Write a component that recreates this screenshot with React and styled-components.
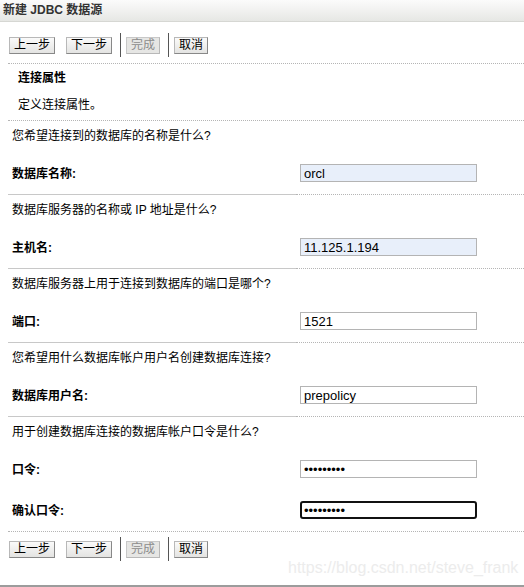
import React from "react";
import styled, { createGlobalStyle, css } from "styled-components";

const Global = createGlobalStyle`
  html, body { margin: 0; padding: 0; background: #fff; }
  body { font-family: "Liberation Sans", "Noto Sans CJK SC", sans-serif; font-size: 12px; color: #000; }
`;

const Page = styled.div`
  position: relative;
  width: 524px;
  height: 587px;
  box-sizing: border-box;
  border-bottom: 2px solid #9c9c9c;
  overflow: hidden;
  background: #fff;
`;

const TitleBar = styled.div`
  height: 21px;
  line-height: 21px;
  padding-left: 3px;
  font-size: 12px;
  font-weight: bold;
  color: #333;
  background: linear-gradient(#fbfbfb, #f2f2f1 45%, #e6e7e4);
  border-bottom: 1px solid #d6d7d3;
`;

const Toolbar = styled.div`
  display: flex;
  align-items: center;
  height: 24px;
  padding: ${(p) => (p.$bottom ? "5px 0 0 9px" : "11px 0 6px 9px")};
`;

const Button = styled.button`
  height: 17px;
  padding: 0 4px;
  margin: 0;
  margin-right: ${(p) => p.$mr || 0}px;
  font-family: "Liberation Sans", "Noto Sans CJK SC", sans-serif;
  font-size: 12px;
  line-height: 15px;
  color: ${(p) => (p.disabled ? "#8c8c8c" : "#000")};
  background: ${(p) =>
    p.disabled ? "#e6e6e4" : "linear-gradient(#fafafa, #e4e4e2)"};
  border: 1px solid;
  border-color: ${(p) =>
    p.disabled ? "#c8c8c8 #b8b8b8 #b8b8b8 #c8c8c8" : "#b8b8b8 #888 #888 #b8b8b8"};
  border-radius: 0;
  cursor: default;
`;

const VSep = styled.div`
  width: 1px;
  height: 24px;
  background: #555;
  margin: 0 5px 0 8px;
`;

const DottedLine = styled.div`
  margin-left: 8px;
  border-top: 1px dotted #b5b5b5;
`;

const SplitLine = styled.div`
  display: flex;
  margin-left: 8px;
  height: 1px;
`;

const SolidPart = styled.div`
  width: 288px;
  border-top: 1px solid #c8c8c8;
`;

const DotPart = styled.div`
  flex: 1;
  border-top: 1px dotted #b5b5b5;
`;

const Header = styled.div`
  height: 56px;
  padding-left: 18px;
`;

const HeaderTitle = styled.div`
  padding-top: 7px;
  line-height: 14px;
  font-weight: bold;
`;

const HeaderDesc = styled.div`
  margin-top: 13px;
  line-height: 14px;
`;

const Section = styled.div`
  padding: 8px 0 12px 12px;
`;

const Question = styled.div`
  line-height: 14px;
  height: 14px;
  margin-bottom: 21px;
`;

const FieldRow = styled.div`
  display: grid;
  grid-template-columns: 288px 177px;
  align-items: center;
  height: 18px;
  margin-top: ${(p) => p.$mt || 0}px;
`;

const Label = styled.label`
  font-weight: bold;
  line-height: 14px;
  padding-top: 1px;
`;

const Input = styled.input`
  box-sizing: border-box;
  width: 177px;
  height: 18px;
  margin: 0;
  padding: 0 3px;
  font-family: "Liberation Sans", sans-serif;
  font-size: 13px;
  color: #000;
  background: ${(p) => (p.$filled ? "#e8effa" : "#fff")};
  border: 1px solid #b4b4b4;
  border-radius: 0;
  outline: none;
  ${(p) =>
    p.$focused &&
    css`
      border: 2px solid #111;
      border-radius: 3px;
      padding: 0 2px;
    `}
`;

const Watermark = styled.div`
  position: absolute;
  left: 288px;
  top: 559px;
  font-family: "Liberation Sans", sans-serif;
  font-size: 16px;
  line-height: 18px;
  color: #ececec;
  white-space: nowrap;
`;

function Buttons({ bottom }) {
  return (
    <Toolbar $bottom={bottom}>
      <Button $mr={11}>上一步</Button>
      <Button>下一步</Button>
      <VSep />
      <Button disabled>完成</Button>
      <VSep />
      <Button>取消</Button>
    </Toolbar>
  );
}

const sections = [
  {
    q: "您希望连接到的数据库的名称是什么?",
    fields: [{ label: "数据库名称:", value: "orcl", filled: true }],
  },
  {
    q: "数据库服务器的名称或 IP 地址是什么?",
    fields: [{ label: "主机名:", value: "11.125.1.194", filled: true }],
  },
  {
    q: "数据库服务器上用于连接到数据库的端口是哪个?",
    fields: [{ label: "端口:", value: "1521" }],
  },
  {
    q: "您希望用什么数据库帐户用户名创建数据库连接?",
    fields: [{ label: "数据库用户名:", value: "prepolicy" }],
  },
  {
    q: "用于创建数据库连接的数据库帐户口令是什么?",
    fields: [
      { label: "口令:", value: "123456789", type: "password" },
      { label: "确认口令:", value: "123456789", type: "password", focused: true, mt: 23 },
    ],
  },
];

export default function App() {
  return (
    <Page>
      <Global />
      <TitleBar>新建 JDBC 数据源</TitleBar>
      <Buttons />
      <DottedLine />
      <Header>
        <HeaderTitle>连接属性</HeaderTitle>
        <HeaderDesc>定义连接属性。</HeaderDesc>
      </Header>
      {sections.map((s, i) => (
        <React.Fragment key={i}>
          {i === 0 ? (
            <DottedLine />
          ) : (
            <SplitLine>
              <SolidPart />
              <DotPart />
            </SplitLine>
          )}
          <Section>
            <Question>{s.q}</Question>
            {s.fields.map((f, j) => (
              <FieldRow key={j} $mt={f.mt}>
                <Label>{f.label}</Label>
                <Input
                  type={f.type || "text"}
                  defaultValue={f.value}
                  $filled={f.filled}
                  $focused={f.focused}
                  readOnly
                />
              </FieldRow>
            ))}
          </Section>
        </React.Fragment>
      ))}
      <DottedLine />
      <Buttons bottom />
      <Watermark>https://blog.csdn.net/steve_frank</Watermark>
    </Page>
  );
}
